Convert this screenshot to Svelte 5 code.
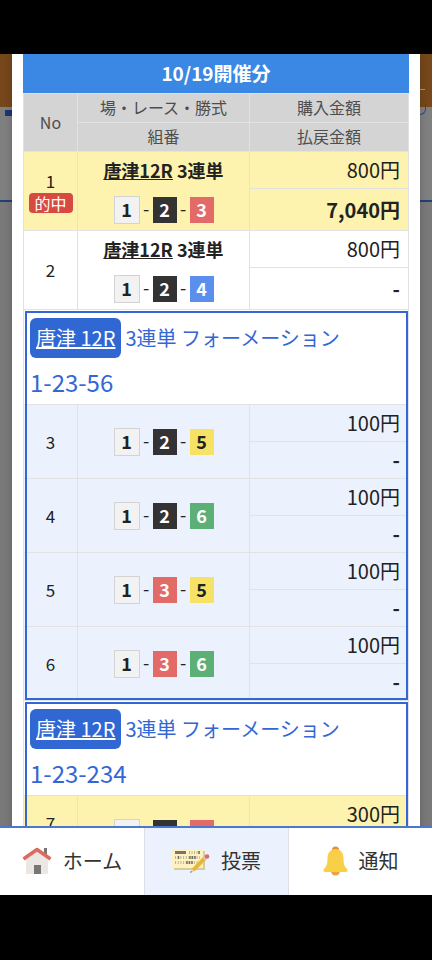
<script lang="ts">
	type Bet = {
		no: number;
		numbers: number[];
		amount: string;
		payout?: string;
		hit?: boolean;
		race?: string;
		type?: string;
	};

	const singles: Bet[] = [
		{ no: 1, race: '唐津12R', type: '3連単', numbers: [1, 2, 3], amount: '800円', payout: '7,040円', hit: true },
		{ no: 2, race: '唐津12R', type: '3連単', numbers: [1, 2, 4], amount: '800円' }
	];

	const formations: { race: string; type: string; combo: string; bets: Bet[] }[] = [
		{
			race: '唐津 12R',
			type: '3連単 フォーメーション',
			combo: '1-23-56',
			bets: [
				{ no: 3, numbers: [1, 2, 5], amount: '100円' },
				{ no: 4, numbers: [1, 2, 6], amount: '100円' },
				{ no: 5, numbers: [1, 3, 5], amount: '100円' },
				{ no: 6, numbers: [1, 3, 6], amount: '100円' }
			]
		},
		{
			race: '唐津 12R',
			type: '3連単 フォーメーション',
			combo: '1-23-234',
			bets: [{ no: 7, numbers: [1, 2, 3], amount: '300円', payout: '2,640円', hit: true }]
		}
	];

	let current = $state('vote');
</script>

{#snippet betRows(bet: Bet)}
	<tr class="bet" class:hit={bet.hit} class:single={bet.race}>
		<td class="no" rowspan="2">
			{bet.no}
			{#if bet.hit}<span class="badge">的中</span>{/if}
		</td>
		<td class="pick" rowspan="2">
			{#if bet.race}
				<div class="race"><a href="#race">{bet.race}</a> {bet.type}</div>
			{/if}
			<div class="boats">
				{#each bet.numbers as n, i}
					{#if i > 0}<span class="dash">-</span>{/if}
					<span class="boat boat-{n}">{n}</span>
				{/each}
			</div>
		</td>
		<td class="money">{bet.amount}</td>
	</tr>
	<tr class="bet second" class:hit={bet.hit} class:single={bet.race}>
		<td class="money payout">{bet.payout ?? '-'}</td>
	</tr>
{/snippet}

<div class="screen">
	<div class="system-bar top"></div>

	<main>
		<div class="backdrop" aria-hidden="true">
			<div class="site-header"><span></span></div>
			<div class="site-panel"><i></i><b></b></div>
		</div>

		<div class="modal">
			<h1>10/19開催分</h1>
			<table>
				<colgroup>
					<col class="col-no" />
					<col class="col-pick" />
					<col />
				</colgroup>
				<thead>
					<tr>
						<th rowspan="2">No</th>
						<th>場・レース・勝式</th>
						<th>購入金額</th>
					</tr>
					<tr>
						<th>組番</th>
						<th>払戻金額</th>
					</tr>
				</thead>
				<tbody>
					{#each singles as bet}
						{@render betRows(bet)}
					{/each}
				</tbody>
				{#each formations as group}
					<tbody class="formation">
						<tr>
							<td class="formation-head" colspan="3">
								<div class="formation-title">
									<a href="#race">{group.race}</a>
									<span>{group.type}</span>
								</div>
								<div class="combo">{group.combo}</div>
							</td>
						</tr>
						{#each group.bets as bet}
							{@render betRows(bet)}
						{/each}
					</tbody>
				{/each}
			</table>
		</div>
	</main>

	<nav>
		<button type="button" class:active={current === 'home'} onclick={() => (current = 'home')}>
			<svg width="30" height="28" viewBox="0 0 30 28" aria-hidden="true">
				<path d="M22 1h3v9h-3z" fill="#777" />
				<path d="M15 3 26 12v15H4V12z" fill="#ebe7e2" />
				<path d="M12 18h7v9h-7z" fill="#777" />
				<path d="M1.500 12 15 2.500 28.500 12" fill="none" stroke="#dd6a5f" stroke-width="3.500" stroke-linejoin="round" />
			</svg>
			ホーム
		</button>
		<button type="button" class:active={current === 'vote'} onclick={() => (current = 'vote')}>
			<svg width="38" height="28" viewBox="1 1 38 28" aria-hidden="true">
				<path d="M3 5h31v19H3z" fill="#d8cd9a" />
				<path d="M1 3h31v19H1z" fill="#fff2c2" />
				<path d="M4 5h11v3H4z" fill="#77756c" />
				<g fill="none" stroke="#bdb593">
					<path d="M18 6.500h11" stroke-width="3" stroke-dasharray="1 1.500" />
					<path d="M4 11.500h25M4 16.500h25" stroke-width="3" stroke-dasharray="1 1.700" />
				</g>
				<path d="M28 5v3M7.500 10v3M19 10v3M21.500 10v3M24 10v3M16 15v3M18.500 15v3M21 15v3" stroke="#716f63" stroke-width="1.500" />
				<path d="m20 26 1.500-4L32 11l3 3-10.500 10.500z" fill="#e5b83c" />
				<path d="m19 27 2-4 2.500 2.500z" fill="#e9d5aa" />
				<path d="m19 27 1-2 1 1z" fill="#666" />
				<path d="m31.500 11.500 2-1.500 2.500 2.500-2 2z" fill="#c9c9c9" />
				<circle cx="36" cy="10.500" r="2.300" fill="#e06a62" />
			</svg>
			投票
		</button>
		<button type="button" class:active={current === 'news'} onclick={() => (current = 'news')}>
			<svg width="25" height="30" viewBox="0 0 25 30" aria-hidden="true">
				<circle cx="12.500" cy="4" r="3.500" fill="#e88b38" />
				<circle cx="12.500" cy="25" r="4.500" fill="#f0a13a" />
				<path d="M12.500 3C7.500 3 4.500 7 4.500 12c0 6-1 8.500-3.500 11-1.200 1.500-.500 3 1 3h21c1.500 0 2.200-1.500 1-3-2.500-2.500-3.500-5-3.500-11 0-5-3-9-8-9z" fill="#f8d048" />
			</svg>
			通知
		</button>
	</nav>

	<div class="system-bar bottom"></div>
</div>

<style>
	:global(body) {
		margin: 0;
		background: #000;
	}

	.screen {
		display: flex;
		flex-direction: column;
		height: 100vh;
		font-family: 'Noto Sans CJK JP', sans-serif;
		color: #222;
	}

	.screen * {
		box-sizing: border-box;
	}

	.system-bar {
		flex: none;
		background: #000;
	}

	.top {
		height: 54px;
	}

	.bottom {
		height: 65px;
	}

	main {
		flex: 1;
		min-height: 0;
		position: relative;
		overflow: hidden;
		padding: 0 12px;
		background: #797979;
	}

	/* dimmed page behind the modal */
	.backdrop {
		position: absolute;
		inset: 0;
	}

	.site-header {
		height: 53px;
		background: #75471a;
	}

	.site-header span {
		position: absolute;
		top: 35px;
		right: 7px;
		width: 12px;
		height: 1px;
		background: #999;
	}

	.site-panel {
		position: relative;
		height: 95px;
		background: #7f7f7f;
		border-bottom: 2px solid #233f79;
	}

	.site-panel i {
		position: absolute;
		top: 3px;
		left: 5px;
		width: 12px;
		height: 6px;
		background: #193775;
	}

	.site-panel b {
		position: absolute;
		top: -4px;
		right: 6px;
		width: 12px;
		height: 12px;
		border: 1px solid #294a91;
		border-top: 0;
		border-radius: 0 0 6px 6px;
	}

	.modal {
		position: relative;
		min-height: 100%;
		padding: 0 11px;
		background: #fff;
		box-shadow: 0 0 8px rgba(0, 0, 0, 0.2);
	}

	h1 {
		margin: 0;
		height: 39px;
		background: #3a88e4;
		color: #fff;
		font-size: 19px;
		line-height: 38px;
		text-align: center;
	}

	table {
		width: 100%;
		table-layout: fixed;
		border-collapse: collapse;
	}

	.col-no {
		width: 54px;
	}

	.col-pick {
		width: 172px;
	}

	th,
	td {
		padding: 0;
		border: 1px solid #e2e2e2;
		text-align: center;
	}

	th {
		height: 29px;
		padding-bottom: 2px;
		background: #d4d4d4;
		color: #4d4d4d;
		font-size: 16px;
		font-weight: 400;
		line-height: 24px;
	}

	.bet td {
		background: #fff;
	}

	.formation .bet td {
		background: #ebf2fe;
	}

	.screen .bet.hit td {
		background: #fdf2ae;
	}

	.no {
		font-size: 17px;
		line-height: 24px;
	}

	.badge {
		display: block;
		width: 44px;
		margin: 0 auto;
		border-radius: 4px;
		background: #d64a42;
		color: #fff;
		font-size: 16px;
		line-height: 20px;
	}

	.race {
		margin-bottom: 14px;
		font-size: 18px;
		font-weight: 700;
		line-height: 24px;
	}

	a {
		color: inherit;
		text-decoration: underline;
	}

	.boats {
		display: flex;
		align-items: center;
		justify-content: center;
		height: 28px;
		font-size: 18px;
		line-height: 24px;
	}

	.dash {
		width: 13px;
		padding-bottom: 4px;
	}

	.boat {
		width: 24px;
		height: 26px;
		font-weight: 700;
		color: #fff;
	}

	.boat-1 {
		width: 26px;
		height: 28px;
		border: 1px solid #d3d3d3;
		background: #f2f2f2;
		color: #222;
	}

	.boat-2 {
		background: #333;
	}

	.boat-3 {
		background: #e26a67;
	}

	.boat-4 {
		background: #5b8fee;
	}

	.boat-5 {
		background: #f6e264;
		color: #222;
	}

	.boat-6 {
		background: #5db075;
	}

	.money {
		height: 37px;
		padding-right: 8px;
		font-size: 20px;
		line-height: 28px;
		text-align: right;
	}

	.payout {
		font-weight: 700;
	}

	.single.second .payout {
		height: 42px;
	}

	.formation {
		outline: 2px solid #3367d6;
		outline-offset: -3px;
	}

	.formation-head {
		height: 95px;
		padding: 8px 6px 4px;
		color: #3367d6;
		text-align: left;
		vertical-align: top;
	}

	.formation-title {
		display: flex;
		align-items: center;
		gap: 4px;
		height: 40px;
		font-size: 20px;
		line-height: 40px;
	}

	.formation-title a {
		padding: 0 6px;
		border-radius: 6px;
		background: #3167d3;
		color: #fff;
	}

	.combo {
		margin-top: 6px;
		font-size: 24px;
		line-height: 36px;
	}

	nav {
		flex: none;
		display: grid;
		grid-template-columns: repeat(3, 1fr);
		height: 69px;
		border-top: 2px solid #4a78cf;
		background: #fff;
	}

	button {
		display: flex;
		align-items: center;
		justify-content: center;
		gap: 11px;
		padding: 0 0 2px;
		border: 0;
		background: #fff;
		color: #333;
		font-family: inherit;
		font-size: 20px;
		cursor: pointer;
	}

	button + button {
		border-left: 1px solid #dcdfe5;
	}

	button.active {
		background: #ebf2fe;
	}
</style>
